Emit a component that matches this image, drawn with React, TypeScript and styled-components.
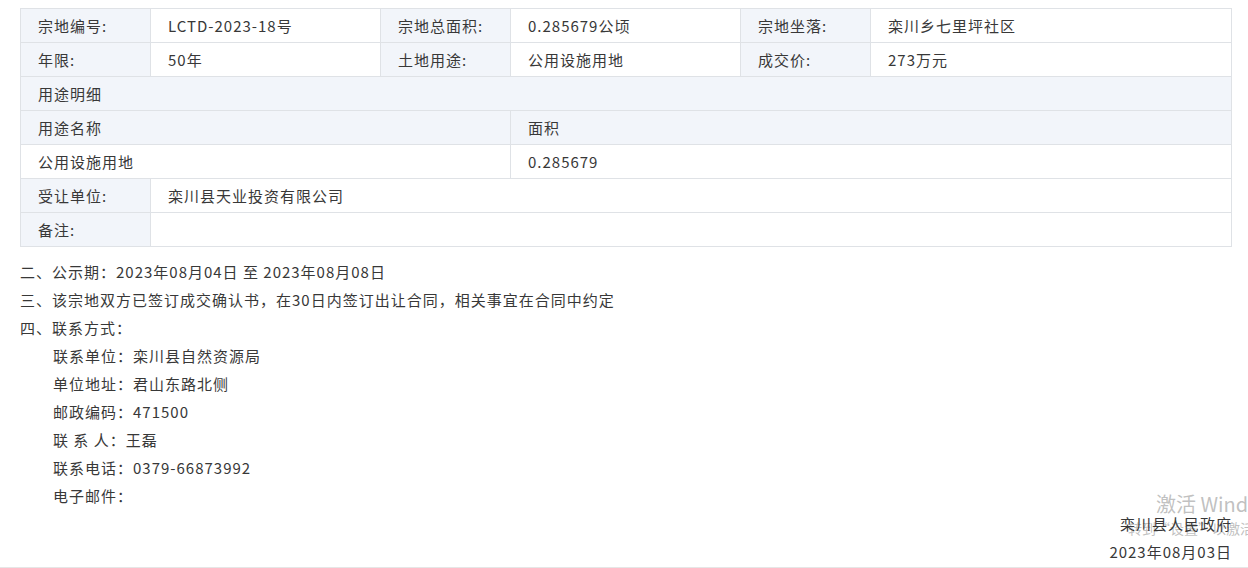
import React from "react";
import styled, { createGlobalStyle } from "styled-components";

const Global = createGlobalStyle`
  html, body { margin: 0; padding: 0; background: #fff; }
  body { font-family: "Microsoft YaHei", "Noto Sans CJK SC", "Noto Sans", sans-serif; color: #333; font-size: 15px; }
`;

const Page = styled.div`
  position: relative;
  width: 1248px;
  height: 568px;
  overflow: hidden;
  box-sizing: border-box;
  padding: 8px 16px 0 20px;
`;

const Table = styled.table`
  width: 1212px;
  border-collapse: collapse;
  table-layout: fixed;
`;

const Cell = styled.td<{ $label?: boolean }>`
  height: 34px;
  box-sizing: border-box;
  border: 1px solid #dfe2e6;
  padding: 0 0 0 17px;
  font-size: 15px;
  letter-spacing: 1px;
  line-height: 20px;
  color: #383838;
  background: ${(p) => (p.$label ? "#f2f5fa" : "#fff")};
  vertical-align: middle;
  white-space: nowrap;
`;

const Notes = styled.div`
  margin-top: 11px;
  font-size: 15px;
  letter-spacing: 1px;
  line-height: 28px;
  color: #383838;
`;

const Line = styled.div<{ $indent?: boolean }>`
  padding-left: ${(p) => (p.$indent ? "33px" : "0")};
  white-space: nowrap;
`;

const Sign = styled.div`
  text-align: right;
  position: relative;
  z-index: 1;
`;

const Footer = styled.div`
  border-bottom: 1px solid #e6e6e6;
  margin-left: -20px;
  margin-right: -16px;
  padding-right: 16px;
  height: 57px;
`;

const Watermark = styled.div`
  position: absolute;
  left: 1156px;
  top: 490px;
  color: rgba(165, 165, 165, 0.7);
  font-family: "Noto Sans CJK SC", sans-serif;
  white-space: nowrap;
  pointer-events: none;
  z-index: 0;
`;

const WmBig = styled.div`
  font-size: 20px;
  line-height: 28px;
`;

const WmSmall = styled.div`
  font-size: 14px;
  line-height: 20px;
  margin-left: -28px;
`;

export default function App() {
  return (
    <Page>
      <Global />
      <Table>
        <colgroup>
          <col style={{ width: 130 }} />
          <col style={{ width: 230 }} />
          <col style={{ width: 130 }} />
          <col style={{ width: 230 }} />
          <col style={{ width: 130 }} />
          <col />
        </colgroup>
        <tbody>
          <tr>
            <Cell $label>宗地编号:</Cell>
            <Cell>LCTD-2023-18号</Cell>
            <Cell $label>宗地总面积:</Cell>
            <Cell>0.285679公顷</Cell>
            <Cell $label>宗地坐落:</Cell>
            <Cell>栾川乡七里坪社区</Cell>
          </tr>
          <tr>
            <Cell $label>年限:</Cell>
            <Cell>50年</Cell>
            <Cell $label>土地用途:</Cell>
            <Cell>公用设施用地</Cell>
            <Cell $label>成交价:</Cell>
            <Cell>273万元</Cell>
          </tr>
          <tr>
            <Cell $label colSpan={6}>用途明细</Cell>
          </tr>
          <tr>
            <Cell $label colSpan={3}>用途名称</Cell>
            <Cell $label colSpan={3}>面积</Cell>
          </tr>
          <tr>
            <Cell colSpan={3}>公用设施用地</Cell>
            <Cell colSpan={3}>0.285679</Cell>
          </tr>
          <tr>
            <Cell $label>受让单位:</Cell>
            <Cell colSpan={5}>栾川县天业投资有限公司</Cell>
          </tr>
          <tr>
            <Cell $label>备注:</Cell>
            <Cell colSpan={5}></Cell>
          </tr>
        </tbody>
      </Table>
      <Notes>
        <Line>二、公示期：2023年08月04日 至 2023年08月08日</Line>
        <Line>三、该宗地双方已签订成交确认书，在30日内签订出让合同，相关事宜在合同中约定</Line>
        <Line>四、联系方式：</Line>
        <Line $indent>联系单位：栾川县自然资源局</Line>
        <Line $indent>单位地址：君山东路北侧</Line>
        <Line $indent>邮政编码：471500</Line>
        <Line $indent>联 系 人：王磊</Line>
        <Line $indent>联系电话：0379-66873992</Line>
        <Line $indent>电子邮件：</Line>
        <Footer>
          <Sign>栾川县人民政府</Sign>
          <Sign>2023年08月03日</Sign>
        </Footer>
      </Notes>
      <Watermark>
        <WmBig>激活 Windows</WmBig>
        <WmSmall>转到“设置”以激活 Windows。</WmSmall>
      </Watermark>
    </Page>
  );
}
